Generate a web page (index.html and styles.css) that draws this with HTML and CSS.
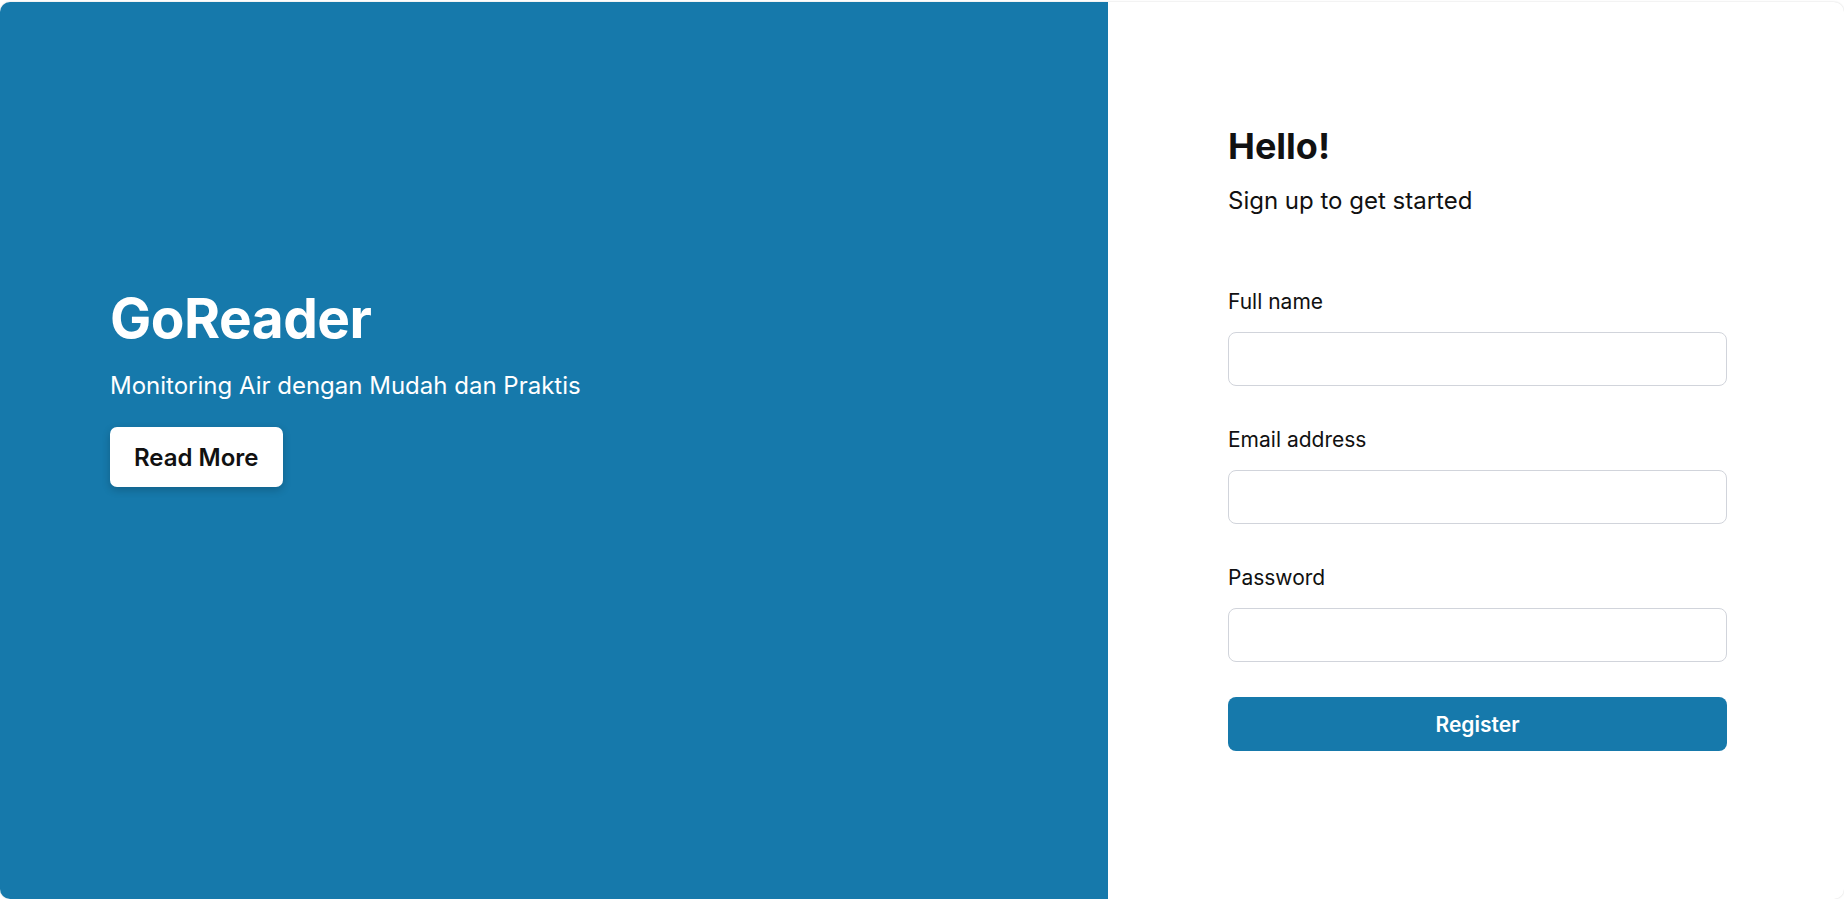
FILE: index.html
```html
<!DOCTYPE html>
<html lang="en">
<head>
<meta charset="utf-8">
<title>GoReader - Register</title>
<link rel="stylesheet" href="styles.css">
</head>
<body>
<main class="card">
  <section class="hero">
    <div class="hero-content">
      <h1 class="hero-title">GoReader</h1>
      <p class="hero-sub">Monitoring Air dengan Mudah dan Praktis</p>
      <button class="btn-light" type="button">Read More</button>
    </div>
  </section>
  <section class="panel">
    <form class="form">
      <h2 class="form-title">Hello!</h2>
      <p class="form-sub">Sign up to get started</p>
      <div class="field">
        <label class="label" for="name">Full name</label>
        <input class="input" id="name" type="text">
      </div>
      <div class="field">
        <label class="label" for="email">Email address</label>
        <input class="input" id="email" type="email">
      </div>
      <div class="field">
        <label class="label" for="pw">Password</label>
        <input class="input" id="pw" type="password">
      </div>
      <button class="btn-primary" type="button">Register</button>
    </form>
  </section>
</main>
</body>
</html>
```
FILE: styles.css
```css
* { box-sizing: border-box; }
html, body { margin: 0; padding: 0; background: #ffffff; }
body {
  font-family: Inter, "Noto Sans", sans-serif;
  color: #111;
  padding-top: 2px;
  height: 899px;
  overflow: hidden;
}
.card {
  display: flex;
  height: 897px;
  border-radius: 10px;
  background: #fff;
  box-shadow: 0 0 2px rgba(0,0,0,0.18);
  overflow: hidden;
}
.hero {
  width: 1108px;
  flex: none;
  background: #1679ab;
  color: #fff;
  padding: 283px 0 0 110px;
}
.hero-title {
  margin: 0;
  font-size: 55px;
  line-height: 67px;
  font-weight: 700;
  letter-spacing: -0.5px;
}
.hero-sub {
  margin: 16px 0 0;
  font-size: 24px;
  line-height: 36px;
  font-weight: 400;
}
.btn-light {
  margin-top: 23px;
  height: 60px;
  padding: 0 24px;
  border: none;
  border-radius: 7px;
  background: #fff;
  color: #111;
  font-family: inherit;
  font-size: 24px;
  font-weight: 600;
  box-shadow: 0 3px 8px rgba(0,0,0,0.2);
}
.panel {
  flex: 1;
  padding: 122px 0 0 120px;
}
.form { width: 499px; }
.form-title {
  margin: 0;
  font-size: 36px;
  line-height: 44px;
  font-weight: 700;
  color: #111;
}
.form-sub {
  margin: 15px 0 0;
  font-size: 24px;
  line-height: 36px;
  color: #111;
}
.field { margin-top: 39px; }
.field:first-of-type { margin-top: 68px; }
.label {
  display: block;
  font-size: 21px;
  line-height: 30px;
  color: #111;
  margin-bottom: 15px;
}
.input {
  display: block;
  width: 100%;
  height: 54px;
  border: 1.5px solid #d1d4db;
  border-radius: 8px;
  background: #fff;
  outline: none;
  font-family: inherit;
  font-size: 18px;
  padding: 0 14px;
}
.btn-primary {
  display: block;
  width: 100%;
  height: 54px;
  margin-top: 35px;
  border: none;
  border-radius: 8px;
  background: #1679ab;
  color: #fff;
  font-family: inherit;
  font-size: 21px;
  font-weight: 600;
}
```
